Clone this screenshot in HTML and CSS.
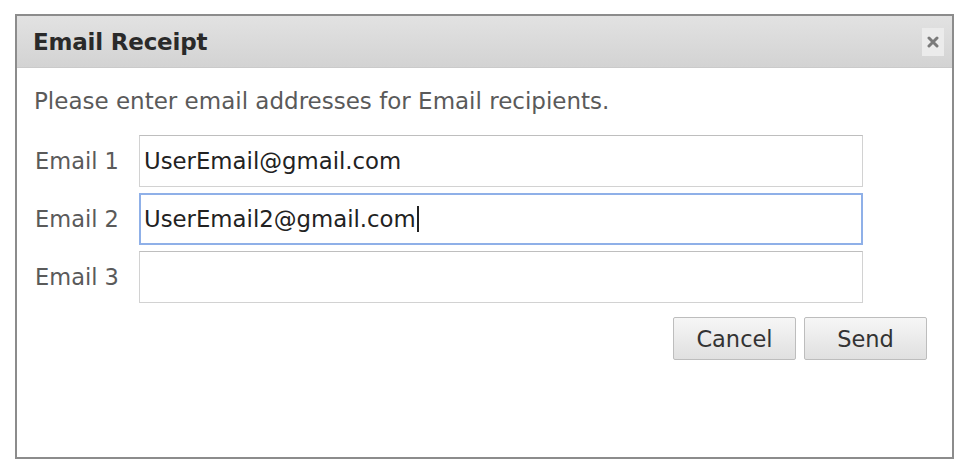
FILE: index.html
```html
<!DOCTYPE html>
<html>
<head>
<meta charset="utf-8">
<link rel="stylesheet" href="styles.css">
</head>
<body>
<div class="dialog">
  <div class="header">
    <span class="title">Email Receipt</span>
    <span class="close"><svg width="12" height="12" viewBox="0 0 12 12"><path d="M2 2 L10 10 M10 2 L2 10" stroke="#7a7a7a" stroke-width="3" stroke-linecap="round"/></svg></span>
  </div>
  <div class="body">
    <p class="intro">Please enter email addresses for Email recipients.</p>
    <div class="row"><label class="lbl">Email 1</label><div class="input">UserEmail@gmail.com</div></div>
    <div class="row"><label class="lbl">Email 2</label><div class="input focus">UserEmail2@gmail.com<span class="caret"></span></div></div>
    <div class="row"><label class="lbl">Email 3</label><div class="input"></div></div>
    <div class="actions">
      <button class="btn">Cancel</button>
      <button class="btn">Send</button>
    </div>
  </div>
</div>
</body>
</html>
```
FILE: styles.css
```css
html, body { margin: 0; padding: 0; background: #fff; }
body { font-family: "DejaVu Sans", Verdana, sans-serif; }
.dialog {
  margin: 14px 0 0 15px;
  width: 939px;
  height: 445px;
  box-sizing: border-box;
  border: 2px solid #8c8c8c;
  background: #fff;
  display: flex;
  flex-direction: column;
}
.header {
  height: 52px;
  flex: none;
  box-sizing: border-box;
  background: linear-gradient(#e2e2e2, #d3d3d3);
  border-bottom: 1px solid #cacaca;
  display: flex;
  align-items: center;
  justify-content: space-between;
  padding: 0 8px 0 16px;
}
.title {
  font-weight: bold;
  font-size: 23px;
  color: #2a2a2a;
  letter-spacing: -0.2px;
}
.close {
  width: 22px;
  height: 28px;
  background: #ebebeb;
  display: flex;
  align-items: center;
  justify-content: center;
}
.body { padding: 0 25px 0 17px; }
.intro {
  margin: 20px 0 21px 0;
  font-size: 23px;
  line-height: 26px;
  color: #5a5a5a;
}
.row {
  display: flex;
  align-items: center;
  margin-bottom: 6px;
}
.lbl {
  width: 105px;
  padding-left: 1px;
  box-sizing: border-box;
  font-size: 22.5px;
  color: #5a5a5a;
}
.input {
  width: 724px;
  height: 52px;
  box-sizing: border-box;
  border: 1px solid #d2d2d2;
  border-top-color: #bebebe;
  padding: 0 4px;
  display: flex;
  align-items: center;
  font-size: 22.8px;
  color: #222;
}
.input.focus { border: 2px solid #8fb0e8; padding: 0 3px; }
.caret { display: inline-block; width: 2px; height: 26px; background: #222; margin-left: 1px; }
.actions {
  display: flex;
  justify-content: flex-end;
  gap: 8px;
  margin-top: 14px;
}
.btn {
  font-family: inherit;
  width: 123px;
  height: 43px;
  padding: 0;
  border: 1px solid #bdbdbd;
  border-radius: 2px;
  background: linear-gradient(#f6f6f6, #e0e0e0);
  color: #333;
  font-size: 22.5px;
}
```
